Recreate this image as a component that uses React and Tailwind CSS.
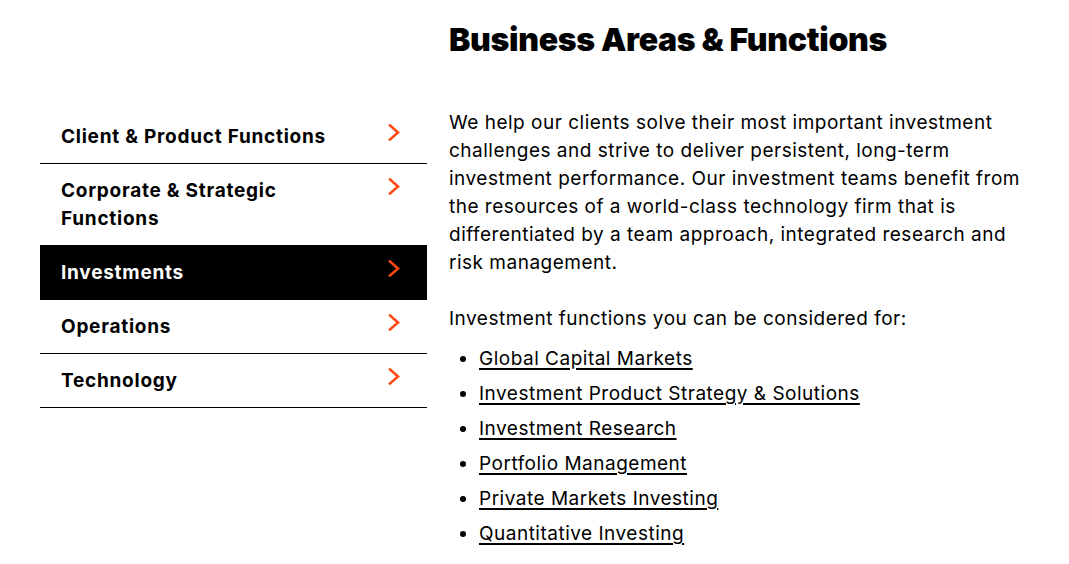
const AREAS = [
  { label: "Client & Product Functions" },
  { label: "Corporate & Strategic Functions", wrap: true },
  { label: "Investments", active: true },
  { label: "Operations" },
  { label: "Technology" },
]

const FUNCTIONS = [
  "Global Capital Markets",
  "Investment Product Strategy & Solutions",
  "Investment Research",
  "Portfolio Management",
  "Private Markets Investing",
  "Quantitative Investing",
]

function Chevron() {
  return (
    <svg width="14" height="19" viewBox="0 0 14 19" className="shrink-0" fill="none">
      <path d="M3 2.5 L11 9.5 L3 16.5" stroke="#ff4713" strokeWidth="2.6" strokeLinecap="square" />
    </svg>
  )
}

function NavRow({ item }) {
  return (
    <div
      className={
        "flex items-start justify-between pl-[21px] pr-[26px] pt-[13px] pb-[12px] border-b " +
        (item.active ? "bg-black text-white border-black" : "bg-white text-black border-black")
      }
    >
      <span className={"text-[19px] leading-[28px] font-bold tracking-[0.75px] " + (item.wrap ? "max-w-[240px]" : "")}>
        {item.label}
      </span>
      <Chevron />
    </div>
  )
}

export default function App() {
  return (
    <div className="w-[1069px] h-[564px] bg-white text-black font-['Inter',sans-serif] flex overflow-hidden">
      <div className="w-[387px] ml-[40px] pt-[110px]">
        {AREAS.map((a) => <NavRow key={a.label} item={a} />)}
      </div>
      <div className="ml-[22px] w-[584px]">
        <h1 className="mt-[20px] text-[32px] leading-[40px] font-black tracking-[-0.3px]">Business Areas &amp; Functions</h1>
        <p className="mt-[49px] text-[19px] leading-[28px] tracking-[0.5px]">
          We help our clients solve their most important investment challenges and strive to deliver persistent, long-term investment performance. Our investment teams benefit from the resources of a world-class technology firm that is differentiated by a team approach, integrated research and risk management.
        </p>
        <p className="mt-[28px] text-[19px] leading-[28px] tracking-[0.5px]">Investment functions you can be considered for:</p>
        <ul className="mt-[12px] pl-[30px] list-disc text-[19px] leading-[28px] tracking-[0.5px]">
          {FUNCTIONS.map((f) => (
            <li key={f} className="mb-[7px]">
              <a href="#" className="underline decoration-[1.5px] underline-offset-[3px]">{f}</a>
            </li>
          ))}
        </ul>
      </div>
    </div>
  )
}
